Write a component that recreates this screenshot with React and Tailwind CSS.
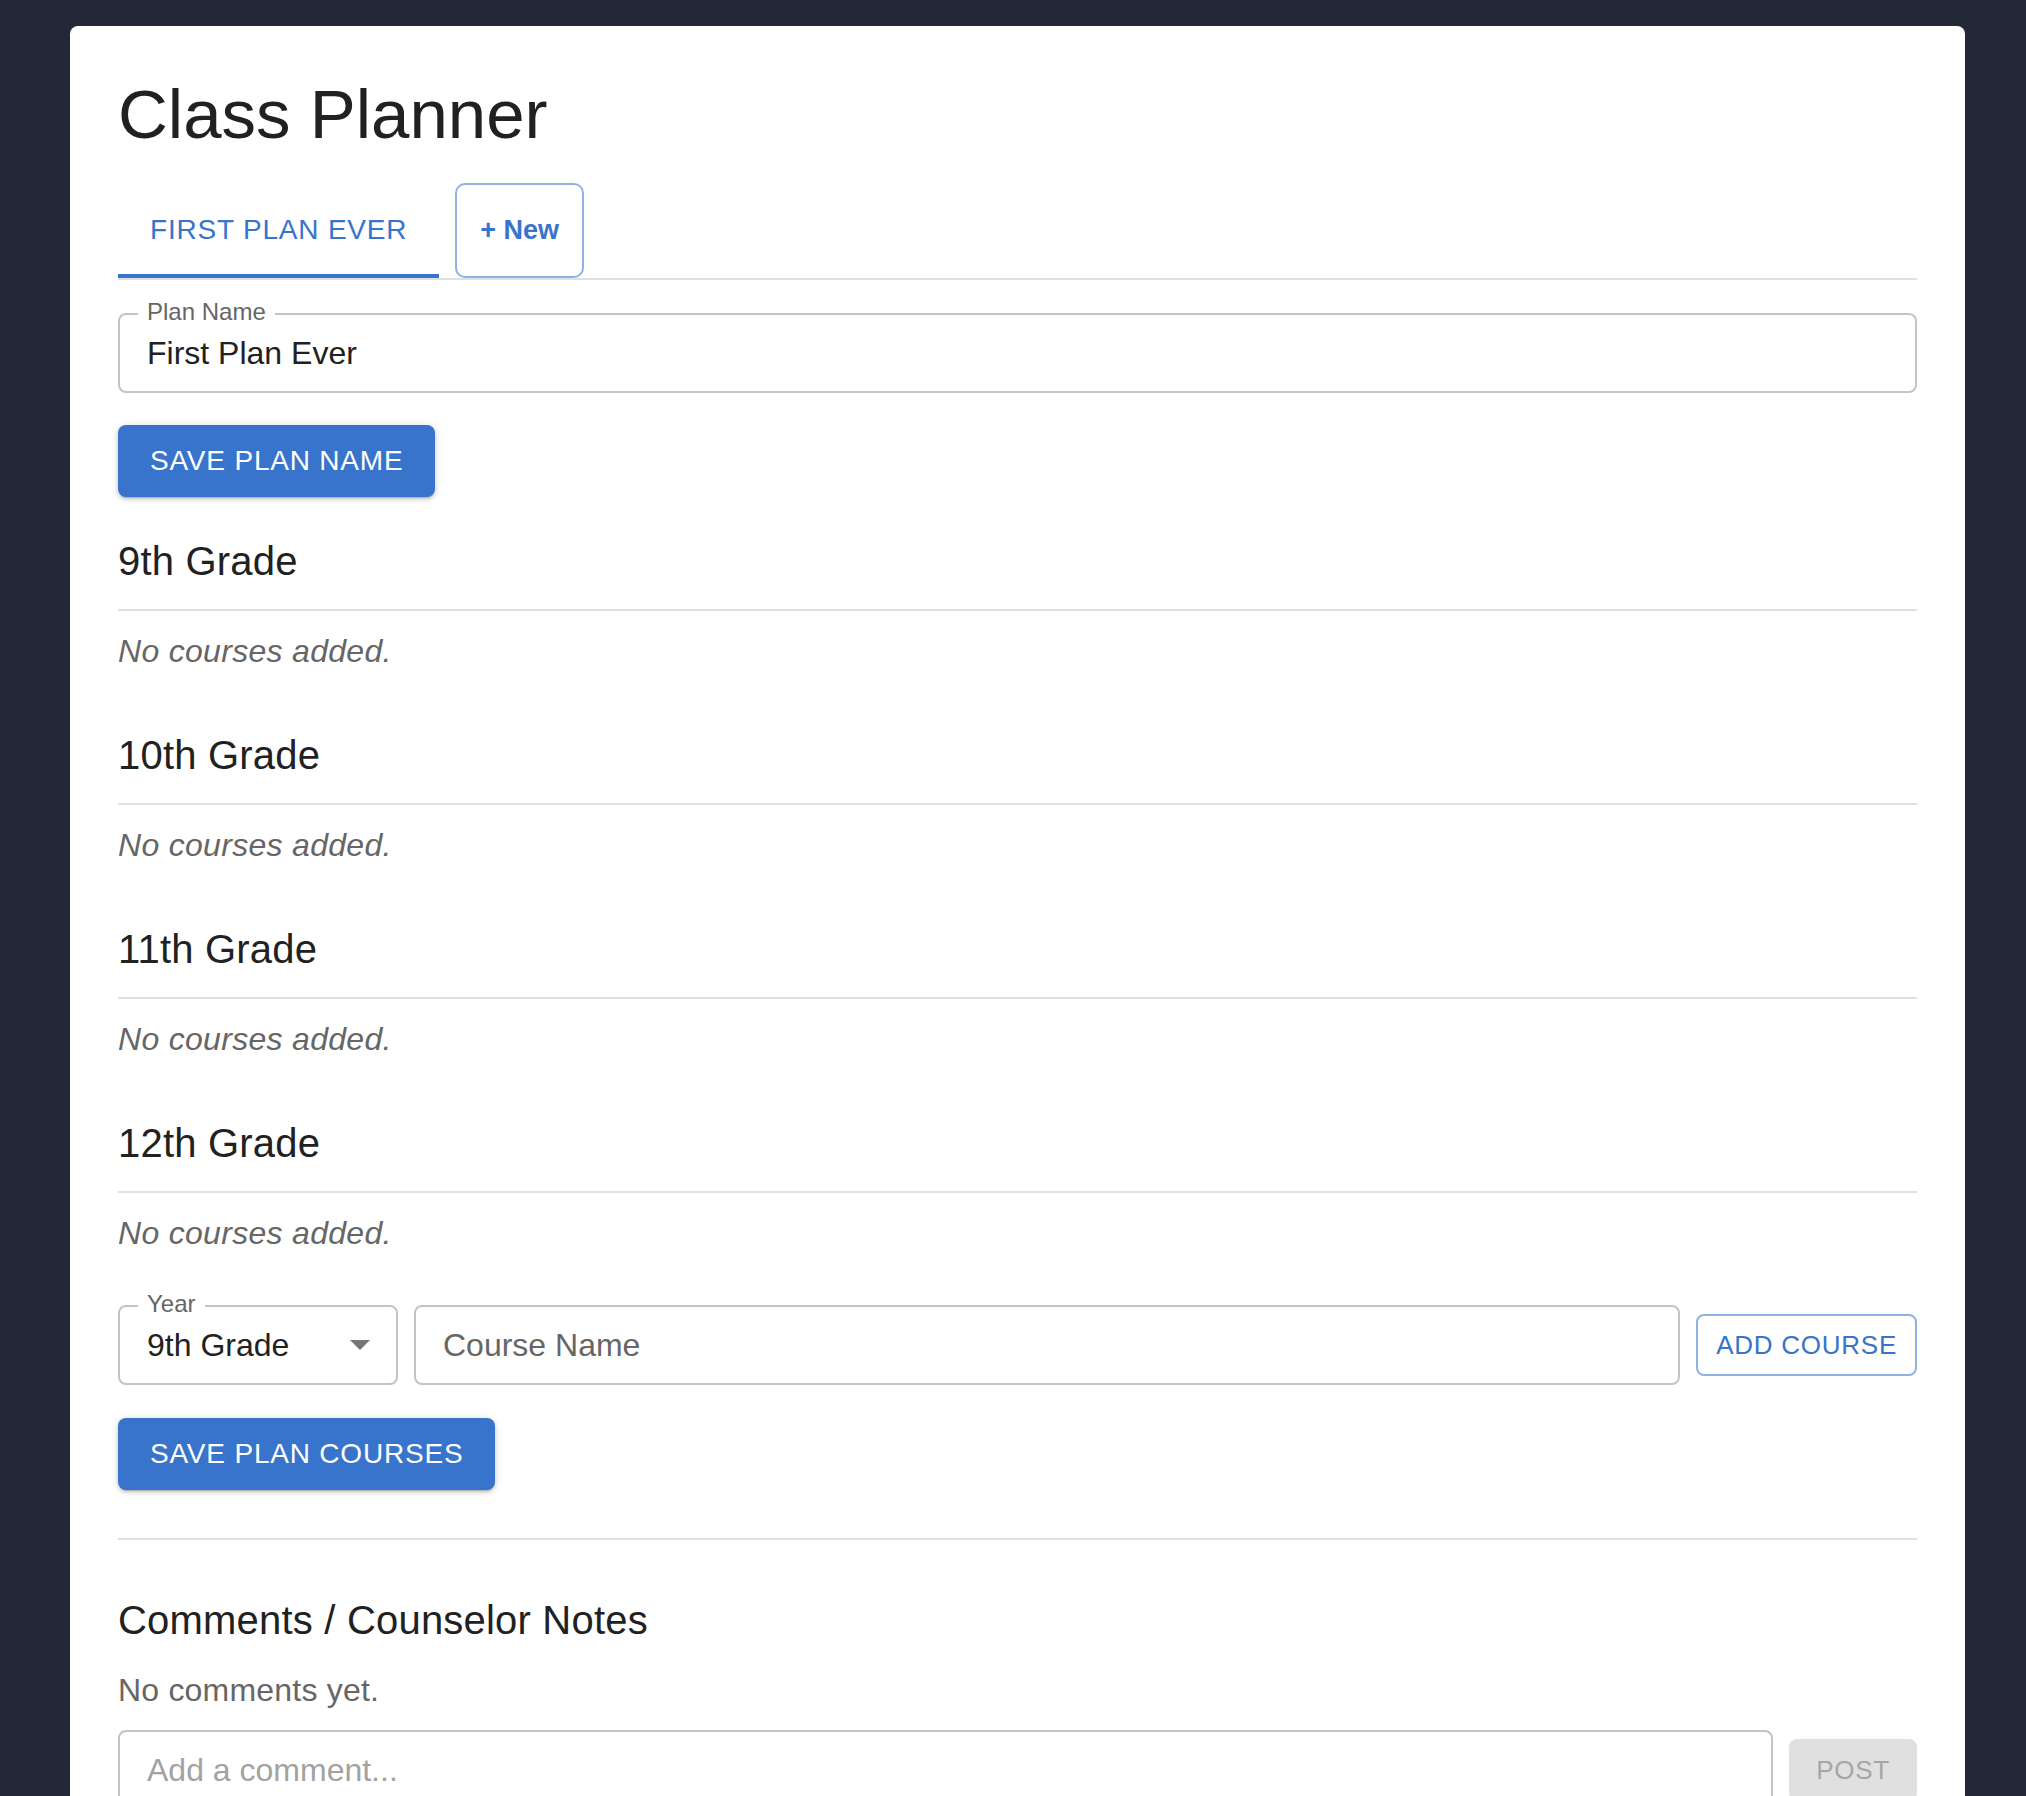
const GRADES = ["9th Grade", "10th Grade", "11th Grade", "12th Grade"];

function OutlinedField({ label, children, className = "" }) {
  return (
    <div className={`relative h-[80px] border-2 border-[#c4c4c4] rounded-[8px] flex items-center pl-[27px] ${className}`}>
      {label && (
        <span className="absolute top-[-15px] left-[18px] px-[9px] bg-white text-[24px] leading-[24px] text-[#666666]">
          {label}
        </span>
      )}
      {children}
    </div>
  );
}

function GradeSection({ name }) {
  return (
    <div className="mt-[48px] first:mt-[32px]">
      <h2 className="text-[40px] leading-[64px] tracking-[0.2px] text-[#212121]">{name}</h2>
      <div className="mt-[16px] h-[2px] bg-[#e0e0e0]" />
      <p className="mt-[16px] text-[32px] leading-[48px] tracking-[0.3px] italic text-[#666666]">No courses added.</p>
    </div>
  );
}

export default function App() {
  return (
    <div className="min-h-screen bg-[#222836] pt-[26px] pl-[70px] pr-[61px] font-['Liberation_Sans',Arial,sans-serif]">
      <div className="bg-white rounded-[8px] px-[48px] pt-[47px] pb-[120px]">
        <h1 className="text-[69px] leading-[84px] text-[#212121] mb-[25px]">Class Planner</h1>

        {/* tabs */}
        <div className="flex h-[98px] border-b-2 border-[#e0e0e0]">
          <div className="relative flex items-center px-[32px] text-[28px] tracking-[0.8px] text-[#3874cb] uppercase">
            First Plan Ever
            <div className="absolute left-0 right-0 bottom-0 h-[4px] bg-[#3874cb]" />
          </div>
          <button className="ml-[16px] mt-[1px] px-[23px] border-2 border-[#8fb1e4] rounded-[10px] text-[27px] font-bold text-[#3874cb]">
            + New
          </button>
        </div>

        <OutlinedField label="Plan Name" className="mt-[33px]">
          <span className="text-[32px] text-[#212121]">First Plan Ever</span>
        </OutlinedField>

        <button className="mt-[32px] h-[72px] px-[32px] bg-[#3874cb] rounded-[8px] text-white text-[28px] tracking-[0.8px] uppercase shadow-[0_3px_2px_-2px_rgba(0,0,0,0.2),0_2px_4px_0_rgba(0,0,0,0.14),0_1px_10px_0_rgba(0,0,0,0.12)]">
          Save Plan Name
        </button>

        <div>
          {GRADES.map((g) => (
            <GradeSection key={g} name={g} />
          ))}
        </div>

        {/* add course row */}
        <div className="mt-[48px] flex items-center gap-[16px]">
          <OutlinedField label="Year" className="w-[280px] pr-[26px]">
            <span className="flex-1 text-[32px] text-[#212121]">9th Grade</span>
            <svg width="20" height="10" viewBox="0 0 20 10">
              <path d="M0 0 L10 10 L20 0 Z" fill="#757575" />
            </svg>
          </OutlinedField>
          <OutlinedField className="flex-1">
            <span className="text-[32px] text-[#666666]">Course Name</span>
          </OutlinedField>
          <button className="h-[62px] px-[18px] border-2 border-[#8fb1e4] rounded-[8px] text-[26px] tracking-[0.74px] text-[#3874cb] uppercase">
            Add Course
          </button>
        </div>

        <button className="mt-[33px] h-[72px] px-[32px] bg-[#3874cb] rounded-[8px] text-white text-[28px] tracking-[0.8px] uppercase shadow-[0_3px_2px_-2px_rgba(0,0,0,0.2),0_2px_4px_0_rgba(0,0,0,0.14),0_1px_10px_0_rgba(0,0,0,0.12)]">
          Save Plan Courses
        </button>

        <div className="mt-[48px] h-[2px] bg-[#e0e0e0]" />

        <h2 className="mt-[48px] text-[40px] leading-[64px] tracking-[0.2px] text-[#212121] mb-[14px]">Comments / Counselor Notes</h2>
        <p className="text-[32px] leading-[48px] tracking-[0.2px] text-[#666666]">No comments yet.</p>

        <div className="mt-[16px] flex items-center gap-[16px]">
          <OutlinedField className="flex-1">
            <span className="text-[32px] text-[#a2a2a2]">Add a comment...</span>
          </OutlinedField>
          <button className="w-[128px] h-[62px] bg-[#e0e0e0] rounded-[8px] text-[26px] tracking-[0.74px] text-[#a6a6a6] uppercase">
            Post
          </button>
        </div>
      </div>
    </div>
  );
}
